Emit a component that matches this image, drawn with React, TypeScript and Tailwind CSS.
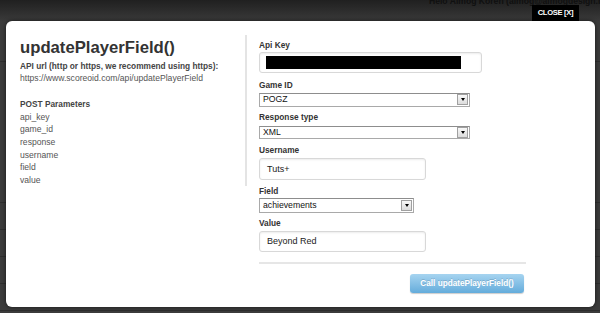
import React from "react";

function Label({ children, mt }: { children: React.ReactNode; mt: string }) {
  return (
    <div className={`${mt} text-[8.3px] font-bold leading-[12px] text-[#333]`}>{children}</div>
  );
}

function Select({ value, w, h, mt }: { value: string; w: string; h: string; mt: string }) {
  return (
    <div
      className={`${mt} ${w} ${h} flex items-center border border-[#a9a9a9] border-t-[#8d8d8d] bg-white`}
    >
      <span className="flex-1 pl-[3px] text-[8.7px] leading-none text-[#111]">{value}</span>
      <span className="mr-px flex h-[11px] w-[11px] items-center justify-center border border-[#a0a0a0] bg-gradient-to-b from-[#f8f8f8] to-[#dcdcdc]">
        <span className="h-0 w-0 border-x-[2.5px] border-t-[3px] border-x-transparent border-t-black" />
      </span>
    </div>
  );
}

function Input({ children, w, h, mt }: { children: React.ReactNode; w: string; h: string; mt: string }) {
  return (
    <div
      className={`${mt} ${w} ${h} flex items-center rounded-[3px] border border-[#d8d8d8] bg-white pl-[6px] shadow-[inset_0_1px_2px_rgba(0,0,0,0.08)]`}
    >
      {children}
    </div>
  );
}

export default function App() {
  const params = ["api_key", "game_id", "response", "username", "field", "value"];
  return (
    <div className="relative h-[313px] w-[600px] overflow-hidden bg-[#3b3b3b] font-['Liberation_Sans',Arial,sans-serif]">
      {/* underlying page */}
      <div className="flex h-[21px] bg-gradient-to-b from-[#202020] to-[#3a3a3a] pl-[429px]">
        <div className="-mt-[3px] whitespace-nowrap text-[8.6px] font-bold leading-[9px] text-[#101010]">
          Helo Almog Koren (almog@almogdesign.net
        </div>
      </div>
      <div className="h-[41px] border-b border-[#2e2e2e]" />
      <div className="h-[141px] border-b border-[#2e2e2e]" />
      <div className="h-[27px] border-b border-[#2e2e2e]" />
      <div className="h-[27px] border-b border-[#2e2e2e]" />
      <div className="h-[27px] border-b border-[#2e2e2e]" />
      <div className="h-[27px] border-b border-[#2e2e2e]" />

      {/* close button */}
      <div className="absolute left-[532px] top-[5px] flex h-[16px] w-[47px] items-center justify-center bg-black text-[7.6px] font-bold tracking-[-0.3px] text-white">
        CLOSE [X]
      </div>

      {/* modal */}
      <div className="absolute left-[6px] top-[21px] flex h-[286px] w-[589px] rounded-[6px] bg-white pl-[14px] pt-[14px] shadow-[0_0_4px_rgba(0,0,0,0.6)]">
        {/* left column */}
        <div className="h-[151px] w-[227px] border-r-2 border-[#e4e4e4]">
          <div className="mt-[2.7px] text-[16.7px] font-bold leading-[20px] text-[#333]">
            updatePlayerField()
          </div>
          <div className="mt-[2.4px] text-[8.3px] font-bold leading-[12px] text-[#444]">
            API url (http or https, we recommend using https):
          </div>
          <div className="text-[8.6px] leading-[12px] text-[#555]">
            https://www.scoreoid.com/api/updatePlayerField
          </div>
          <div className="mt-[14px] text-[8.3px] font-bold leading-[12.67px] text-[#444]">
            POST Parameters
          </div>
          {params.map((p) => (
            <div key={p} className="text-[8.6px] leading-[12.67px] text-[#555]">
              {p}
            </div>
          ))}
        </div>

        {/* right column */}
        <div className="flex w-[279px] flex-col pl-[12px]">
          <Label mt="mt-[3.8px]">Api Key</Label>
          <Input mt="mt-[1.2px]" w="w-[223px]" h="h-[21px]">
            <div className="h-[13px] w-[195px] bg-black" />
          </Input>

          <Label mt="mt-[5.8px]">Game ID</Label>
          <Select mt="mt-[1.9px]" w="w-[211px]" h="h-[14px]" value="POGZ" />

          <Label mt="mt-[4.4px]">Response type</Label>
          <Select mt="mt-[2.6px]" w="w-[211px]" h="h-[13.5px]" value="XML" />

          <Label mt="mt-[5px]">Username</Label>
          <Input mt="mt-[1.9px]" w="w-[167px]" h="h-[22px]">
            <span className="pl-px text-[9px] leading-none text-[#222]">Tuts+</span>
          </Input>

          <Label mt="mt-[4.8px]">Field</Label>
          <Select mt="mt-[1.2px]" w="w-[155px]" h="h-[14.5px]" value="achievements" />

          <Label mt="mt-[4.4px]">Value</Label>
          <Input mt="mt-[1.9px]" w="w-[167px]" h="h-[21px]">
            <span className="pl-px text-[9px] leading-none text-[#222]">Beyond Red</span>
          </Input>

          <div className="mt-[10.5px] h-[1.5px] w-[267px] bg-[#e6e6e6]" />

          <div className="mt-[10.5px] flex w-[265px] justify-end">
            <div className="flex h-[19px] w-[114px] items-center justify-center rounded-[3px] bg-gradient-to-b from-[#a6d4f0] to-[#64acdb] text-[8.2px] font-bold text-white shadow-[0_1px_1px_rgba(0,0,0,0.2)] [text-shadow:0_-1px_0_rgba(0,0,0,0.15)]">
              Call updatePlayerField()
            </div>
          </div>
        </div>
      </div>
    </div>
  );
}
